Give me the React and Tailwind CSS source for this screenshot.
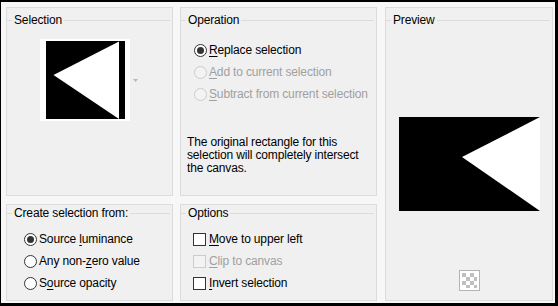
import React from "react";

function Title({ children, className = "" }) {
  return (
    <div className={`flex items-center h-[14px] ${className}`}>
      <span className="w-[5px] h-px bg-[#dcdcdc]" />
      <span className="px-[2px] text-[12px] leading-[14px] tracking-[-0.15px] text-black whitespace-nowrap">{children}</span>
      <span className="flex-1 h-px bg-[#dcdcdc] mr-[2px]" />
    </div>
  );
}

function Radio({ checked, disabled }) {
  return (
    <span
      className={
        disabled
          ? "w-[13px] h-[13px] rounded-full border border-[#cccccc] bg-[#f3f3f3] flex items-center justify-center shrink-0"
          : "w-[13px] h-[13px] rounded-full border border-[#333333] bg-white flex items-center justify-center shrink-0"
      }
    >
      {checked && <span className="w-[7px] h-[7px] rounded-full bg-[#333333]" />}
    </span>
  );
}

function Check({ disabled }) {
  return (
    <span
      className={
        disabled
          ? "w-[13px] h-[13px] border border-[#cccccc] bg-[#f3f3f3] shrink-0"
          : "w-[13px] h-[13px] border border-[#333333] bg-white shrink-0"
      }
    />
  );
}

function U({ children }) {
  return <span className="underline underline-offset-2">{children}</span>;
}

function Row({ control, children, disabled, gap = "ml-[2px]" }) {
  return (
    <div className="flex items-center h-[22px]">
      {control}
      <span className={`${gap} text-[12px] leading-[14px] tracking-[-0.15px] whitespace-nowrap ${disabled ? "text-[#a0a0a0]" : "text-black"}`}>
        {children}
      </span>
    </div>
  );
}

export default function App() {
  return (
    <div
      className="w-[558px] h-[306px] bg-[#f7f7f7] border-black border-t-2 border-l border-r-[3px] border-b-[3px] pt-[5px] pl-[5px] flex"
      style={{ fontFamily: "'Segoe UI', 'Liberation Sans', Arial, sans-serif" }}
    >
      {/* Left column */}
      <div className="flex flex-col w-[167px]">
        <div className="h-[189px] border border-[#dcdcdc] bg-[#f0f0f0] flex flex-col">
          <Title className="mt-[5px]">Selection</Title>
          <div className="flex items-center mt-[12px] ml-[33px]">
            <div className="w-[90px] h-[82px] bg-white pt-[2px] pl-[6px]">
              <svg width="79" height="78" viewBox="0 0 79 78" className="block">
                <rect x="0" y="0" width="79" height="78" fill="#000" />
                <polygon points="7.5,34 73,0.5 73,78" fill="#fff" />
              </svg>
            </div>
            <svg width="5" height="3" viewBox="0 0 5 3" className="ml-[3px] mt-[1px]">
              <polygon points="0,0 5,0 2.5,3" fill="#b8b8b8" />
            </svg>
          </div>
        </div>
        <div className="mt-[8px] h-[97px] border border-[#dcdcdc] bg-[#f0f0f0] flex flex-col">
          <Title className="mt-[1px]">Create selection from:</Title>
          <div className="mt-[8px] pl-[17px] flex flex-col">
            <Row control={<Radio checked />}>
              Source <U>l</U>uminance
            </Row>
            <Row control={<Radio />}>
              Any non-<U>z</U>ero value
            </Row>
            <Row control={<Radio />}>
              S<U>o</U>urce opacity
            </Row>
          </div>
        </div>
      </div>

      {/* Middle column */}
      <div className="flex flex-col w-[197px] ml-[7px]">
        <div className="h-[189px] border border-[#dcdcdc] bg-[#f0f0f0] flex flex-col">
          <Title className="mt-[5px]">Operation</Title>
          <div className="mt-[12px] pl-[13px] flex flex-col">
            <Row control={<Radio checked />}>
              <U>R</U>eplace selection
            </Row>
            <Row control={<Radio disabled />} disabled>
              <U>A</U>dd to current selection
            </Row>
            <Row control={<Radio disabled />} disabled>
              <U>S</U>ubtract from current selection
            </Row>
          </div>
          <p className="mt-[31px] pl-[6px] text-[12px] leading-[13px] tracking-[-0.15px] text-black">
            The original rectangle for this
            <br />
            selection will completely intersect
            <br />
            the canvas.
          </p>
        </div>
        <div className="mt-[8px] h-[97px] border border-[#dcdcdc] bg-[#f0f0f0] flex flex-col">
          <Title className="mt-[1px]">Options</Title>
          <div className="mt-[8px] pl-[12px] flex flex-col">
            <Row control={<Check />} gap="ml-[3px]">
              <U>M</U>ove to upper left
            </Row>
            <Row control={<Check disabled />} disabled gap="ml-[3px]">
              <U>C</U>lip to canvas
            </Row>
            <Row control={<Check />} gap="ml-[3px]">
              <U>I</U>nvert selection
            </Row>
          </div>
        </div>
      </div>

      {/* Preview */}
      <div className="w-[168px] h-[294px] ml-[8px] border border-[#dcdcdc] bg-[#f0f0f0] flex flex-col">
        <Title className="mt-[5px]">Preview</Title>
        <div className="mt-[90px] flex justify-center">
          <svg width="141" height="94" viewBox="0 0 141 94" className="block">
            <rect x="0" y="0" width="141" height="94" fill="#000" />
            <polygon points="63,40 141,0 141,94" fill="#fff" />
          </svg>
        </div>
        <div className="mt-[59px] flex justify-center">
          <svg width="21" height="21" viewBox="0 0 21 21" className="block">
            <rect x="0.5" y="0.5" width="20" height="20" fill="#fff" stroke="#b4b4b4" />
            <rect x="3" y="3" width="4" height="4" fill="#c0c0c0" />
            <rect x="11" y="3" width="4" height="4" fill="#c0c0c0" />
            <rect x="7" y="7" width="4" height="4" fill="#c0c0c0" />
            <rect x="15" y="7" width="3" height="4" fill="#c0c0c0" />
            <rect x="3" y="11" width="4" height="4" fill="#c0c0c0" />
            <rect x="11" y="11" width="4" height="4" fill="#c0c0c0" />
            <rect x="7" y="15" width="4" height="3" fill="#c0c0c0" />
            <rect x="15" y="15" width="3" height="3" fill="#c0c0c0" />
          </svg>
        </div>
      </div>
    </div>
  );
}
